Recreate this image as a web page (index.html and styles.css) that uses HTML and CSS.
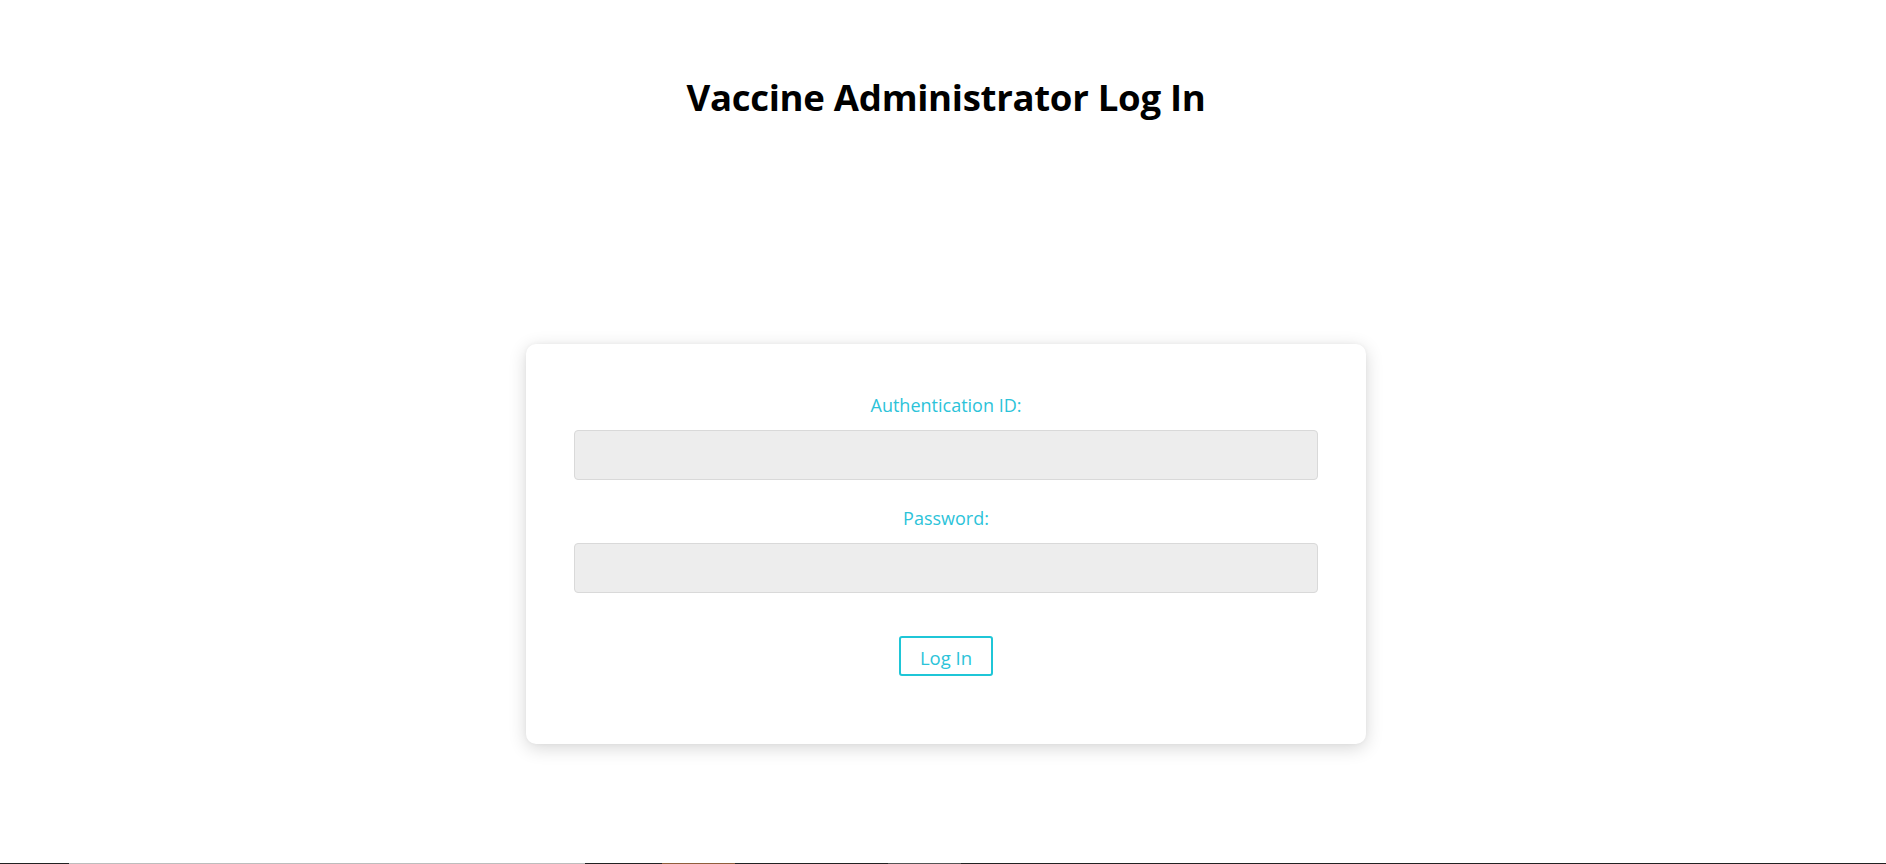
FILE: index.html
```html
<!DOCTYPE html>
<html lang="en">
<head>
<meta charset="utf-8">
<title>Vaccine Administrator Log In</title>
<link rel="stylesheet" href="styles.css">
</head>
<body>
<div class="page">
  <h1 class="title">Vaccine Administrator Log In</h1>
  <form class="card">
    <label class="field-label" for="auth">Authentication ID:</label>
    <input class="field-input" id="auth" type="text">
    <label class="field-label field-label--second" for="pw">Password:</label>
    <input class="field-input" id="pw" type="password">
    <button class="login-btn" type="button">Log In</button>
  </form>
  <div class="bottom-strip"></div>
</div>
</body>
</html>
```

FILE: styles.css
```css
html, body {
  margin: 0;
  padding: 0;
  background: #ffffff;
}

body {
  font-family: "Open Sans", "Noto Sans", sans-serif;
  color: #000;
}

.page {
  display: flex;
  flex-direction: column;
  align-items: center;
  height: 864px;
  box-sizing: border-box;
  padding-left: 6px;
}

.title {
  margin: 0;
  padding-top: 71px;
  font-size: 36.6px;
  line-height: 52px;
  font-weight: 700;
  letter-spacing: -0.3px;
  text-align: center;
}

.card {
  margin-top: 221px;
  width: 840px;
  box-sizing: border-box;
  padding: 49px 48px 68px;
  background: #fff;
  border-radius: 10px;
  box-shadow: 0 4px 18px rgba(0, 0, 0, 0.16), 0 0 4px rgba(0, 0, 0, 0.04);
  display: flex;
  flex-direction: column;
  align-items: center;
}

.field-label {
  font-size: 18px;
  line-height: 24px;
  color: #2cc3d9;
  margin-bottom: 13px;
}

.field-label--second {
  margin-top: 26px;
}

.field-input {
  width: 100%;
  height: 50px;
  box-sizing: border-box;
  background: #ededed;
  border: 1px solid #d9d9d9;
  border-radius: 4px;
  outline: none;
  font-family: inherit;
  font-size: 17px;
  padding: 0 12px;
}

.login-btn {
  margin-top: 43px;
  width: 94px;
  height: 40px;
  box-sizing: border-box;
  padding: 3px 0 0;
  background: #fff;
  border: 2px solid #1fc6d7;
  border-radius: 3px;
  color: #2cc3d9;
  font-family: inherit;
  font-size: 18.5px;
  line-height: 24px;
  cursor: pointer;
}

.bottom-strip {
  margin-top: auto;
  margin-left: -6px;
  align-self: stretch;
  height: 1px;
  background: linear-gradient(to right,
    #222 0, #222 69px,
    #bdbdbd 69px, #bdbdbd 585px,
    #222 585px, #222 662px,
    #8f5f3c 662px, #8f5f3c 735px,
    #222 735px, #222 888px,
    #555 888px, #555 961px,
    #222 961px, #222 100%);
}
```
